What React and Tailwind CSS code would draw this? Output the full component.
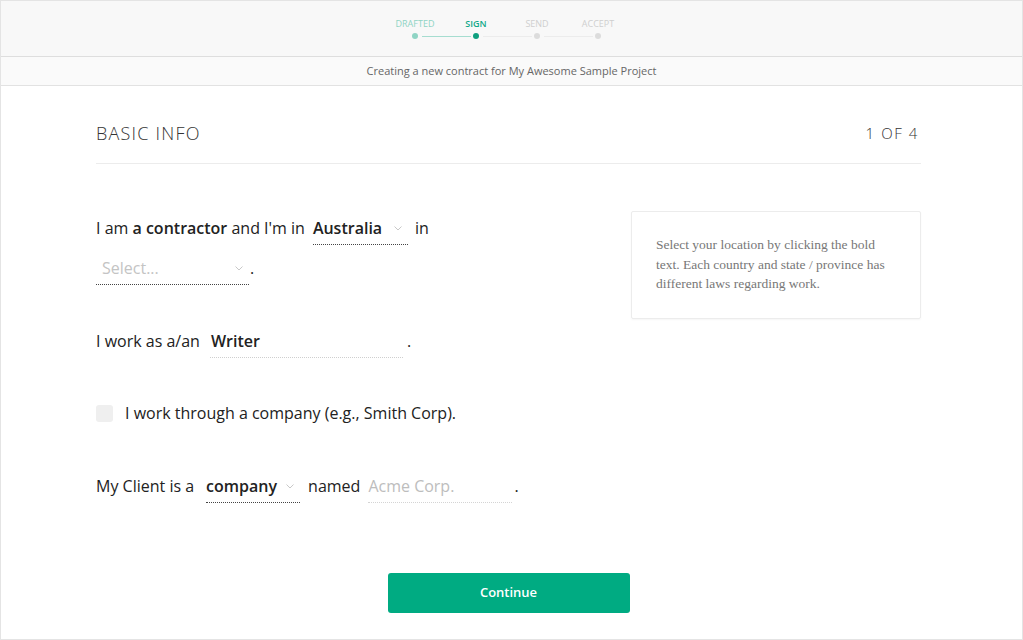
import { useState } from 'react';

const steps = [
  { label: 'Drafted', state: 'done' },
  { label: 'Sign', state: 'current' },
  { label: 'Send', state: 'todo' },
  { label: 'Accept', state: 'todo' },
];

function Chevron() {
  return (
    <svg width="8" height="5" viewBox="0 0 8 5" className="shrink-0 self-center">
      <path d="M0.5 0.5l3.5 3.5 3.5-3.5" fill="none" stroke="#c8c8c8" strokeWidth="1" />
    </svg>
  );
}

function Stepper() {
  return (
    <div className="flex justify-center pr-[10px] pt-[16px]">
      {steps.map((s, i) => (
        <div key={s.label} className="relative flex w-[61px] flex-col items-center">
          <span
            className={`text-[9px] uppercase leading-[14px] ${
              s.state === 'done'
                ? 'text-[#8fd4c4]'
                : s.state === 'current'
                ? 'font-semibold text-[#12a888]'
                : 'text-[#cfcfcf]'
            }`}
          >
            {s.label}
          </span>
          <span
            className={`mt-[2px] block h-[6px] w-[6px] rounded-full ${
              s.state === 'done' ? 'bg-[#8fd4c4]' : s.state === 'current' ? 'bg-[#0e9f7e]' : 'bg-[#dcdcdc]'
            }`}
          />
          {i < steps.length - 1 && (
            <span
              className={`absolute left-[37px] top-[18.5px] h-px w-[49px] ${
                s.state === 'done' ? 'bg-[#a6ddd0]' : 'bg-[#ececec]'
              }`}
            />
          )}
        </div>
      ))}
    </div>
  );
}

function DropField({ value, placeholder, width }) {
  return (
    <span
      className={`inline-flex items-baseline justify-between border-b border-dotted border-[#444] pb-[4px] pr-[6px] ${width}`}
    >
      <span className={value ? 'font-semibold text-[#222]' : 'pl-[6px] text-[#c4c4c4]'}>
        {value || placeholder}
      </span>
      <Chevron />
    </span>
  );
}

export default function App() {
  const [viaCompany, setViaCompany] = useState(false);

  return (
    <div
      className="h-[640px] w-[1023px] overflow-hidden border border-[#e4e4e4] bg-white text-[#222]"
      style={{ fontFamily: '"Open Sans", Lato, sans-serif' }}
    >
      <header className="h-[56px] border-b border-[#dedede] bg-[#f8f8f8]">
        <Stepper />
      </header>
      <div className="flex h-[29px] items-center justify-center border-b border-[#e2e2e2] bg-[#fafafa] text-[11px] text-[#666]">
        Creating a new contract for My Awesome Sample Project
      </div>

      <main className="pl-[95px] pr-[101px]">
        <div className="flex items-center justify-between border-b border-[#ececec] pb-[16px] pt-[34px]">
          <h1 className="text-[18px] font-light uppercase tracking-[1.2px] text-[#333]">Basic Info</h1>
          <span className="pr-[2px] text-[15px] font-light tracking-[1.6px] text-[#333]">1 OF 4</span>
        </div>

        <div className="flex justify-between pt-[47px]">
          <div className="w-[520px] pt-[5px] text-[16px] leading-[24px] text-[#222]">
            {/* location */}
            <div className="flex h-[24px] items-baseline">
              <span>
                I am <span className="font-semibold">a contractor</span> and I'm in
              </span>
              <span className="ml-[8px]">
                <DropField value="Australia" width="w-[95px]" />
              </span>
              <span className="ml-[7px]">in</span>
            </div>
            <div className="mt-[16px] flex h-[24px] items-baseline">
              <DropField placeholder="Select..." width="w-[153px]" />
              <span className="ml-px">.</span>
            </div>

            {/* role */}
            <div className="mt-[49px] flex h-[24px] items-baseline">
              <span>I work as a/an</span>
              <span className="ml-[10px] w-[193px] border-b border-dotted border-[#cfcfcf] pb-[4px] pl-px font-semibold">
                Writer
              </span>
              <span className="ml-[4px]">.</span>
            </div>

            {/* company checkbox */}
            <label className="mt-[48px] flex h-[24px] items-center gap-[12px]">
              <input
                type="checkbox"
                checked={viaCompany}
                onChange={(e) => setViaCompany(e.target.checked)}
                className="h-[17px] w-[17px] appearance-none rounded-[3px] bg-[#efefef]"
              />
              <span>I work through a company (e.g., Smith Corp).</span>
            </label>

            {/* client */}
            <div className="mt-[49px] flex h-[24px] items-baseline">
              <span>My Client is a</span>
              <span className="ml-[12px]">
                <DropField value="company" width="w-[94px]" />
              </span>
              <span className="ml-[8px]">named</span>
              <span className="ml-[8px] w-[144px] border-b border-dotted border-[#d4d4d4] pb-[4px] text-[#bdbdbd]">
                Acme Corp.
              </span>
              <span className="ml-[2px]">.</span>
            </div>
          </div>

          <aside className="h-[108px] w-[290px] rounded-[2px] border border-[#ececec] pl-[24px] pr-[20px] pt-[23px] shadow-[0_1px_2px_rgba(0,0,0,0.04)]">
            <p
              className="text-[13.5px] leading-[19.5px] text-[#777]"
              style={{ fontFamily: '"Liberation Serif", "DejaVu Serif", serif' }}
            >
              Select your location by clicking the bold text. Each country and state / province has different laws
              regarding work.
            </p>
          </aside>
        </div>

        <div className="mt-[75px] flex justify-center">
          <button className="h-[40px] w-[242px] rounded-[3px] bg-[#00ab82] text-[13px] font-semibold text-white">
            Continue
          </button>
        </div>
      </main>
    </div>
  );
}
